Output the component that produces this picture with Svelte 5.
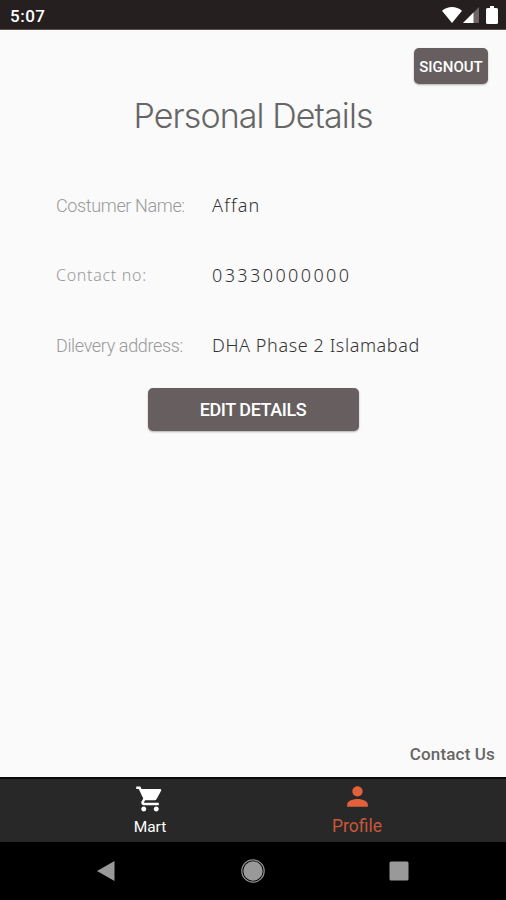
<script lang="ts">
  const details = [
    { label: "Costumer Name:", value: "Affan", kind: "name" },
    { label: "Contact no:", value: "03330000000", kind: "phone" },
    { label: "Dilevery address:", value: "DHA Phase 2 Islamabad", kind: "address" },
  ];
</script>

<div class="screen">
  <header class="status">
    <span class="time">5:07</span>
    <div class="status-icons">
      <svg class="wifi" width="20" height="16" viewBox="0 0 20 16">
        <path d="M0 3.7C6-1.2 14-1.2 20 3.7L10 16z" fill="#fff" />
      </svg>
      <svg class="signal" width="16" height="16" viewBox="0 0 16 16">
        <path d="M16 0v16H0z" fill="#6b6565" />
        <path d="M10.5 5.5V16H0z" fill="#fff" />
      </svg>
      <svg class="battery" width="12" height="18" viewBox="0 0 12 18">
        <path d="M4 0h4v2h2.5Q12 2 12 3.5v13q0 1.5-1.5 1.5h-9Q0 18 0 16.5v-13Q0 2 1.5 2H4z" fill="#fff" />
      </svg>
    </div>
  </header>

  <main>
    <button class="signout">SIGNOUT</button>
    <h1>Personal Details</h1>
    <dl>
      {#each details as item}
        <div class="row {item.kind}">
          <dt>{item.label}</dt>
          <dd>{item.value}</dd>
        </div>
      {/each}
    </dl>
    <button class="edit">EDIT DETAILS</button>
    <a class="contact" href="#contact">Contact Us</a>
  </main>

  <nav class="tabs">
    <div class="tab mart">
      <svg width="30" height="30" viewBox="0 0 24 24" fill="currentColor">
        <path d="M7 18c-1.100 0-1.990.9-1.990 2S5.900 22 7 22s2-.9 2-2-.9-2-2-2zM1 2v2h2l3.600 7.590-1.350 2.450c-.16.280-.25.610-.25.960 0 1.100.9 2 2 2h12v-2H7.420c-.14 0-.25-.11-.25-.25l.03-.12.9-1.630h7.450c.75 0 1.410-.41 1.750-1.030l3.580-6.490c.08-.14.12-.31.12-.48 0-.55-.45-1-1-1H5.210l-.94-2H1zm16 16c-1.100 0-1.990.9-1.990 2s.89 2 1.990 2 2-.9 2-2-.9-2-2-2z" />
      </svg>
      <span>Mart</span>
    </div>
    <div class="tab profile">
      <svg width="31" height="31" viewBox="0 0 24 24" fill="currentColor">
        <path d="M12 12c2.210 0 4-1.790 4-4s-1.790-4-4-4-4 1.790-4 4 1.790 4 4 4zm0 2c-2.670 0-8 1.340-8 4v2h16v-2c0-2.660-5.330-4-8-4z" />
      </svg>
      <span>Profile</span>
    </div>
  </nav>

  <footer class="system">
    <svg width="20" height="22" viewBox="0 0 20 22">
      <path d="M18.500 1v20L1 11z" fill="#999" />
    </svg>
    <svg width="24" height="24" viewBox="0 0 24 24">
      <circle cx="12" cy="12" r="11.200" fill="none" stroke="#929292" stroke-width="1.200" />
      <circle cx="12" cy="12" r="9.700" fill="#999" />
    </svg>
    <svg width="20" height="20" viewBox="0 0 20 20">
      <rect x="0.500" y="0.500" width="19" height="19" rx="1.500" fill="#999" />
    </svg>
  </footer>
</div>

<style>
  :global(body) {
    margin: 0;
  }

  .screen {
    display: flex;
    flex-direction: column;
    width: 506px;
    height: 900px;
    overflow: hidden;
    background: #fafafa;
    font-family: Roboto, sans-serif;
  }

  .status {
    box-sizing: border-box;
    display: flex;
    justify-content: space-between;
    height: 30px;
    padding: 0 8px 0 10px;
    background: #261f20;
    border-bottom: 1px solid #5b5353;
    color: #fff;
  }

  .time {
    font-size: 17px;
    font-weight: 500;
    line-height: 32px;
    letter-spacing: 0.5px;
  }

  .status-icons {
    display: flex;
    align-items: flex-start;
    padding-top: 6px;
  }

  .wifi {
    margin-top: 1px;
  }

  .signal {
    margin: 1px 7px 0 1px;
  }

  main {
    display: flex;
    flex: 1;
    flex-direction: column;
    align-items: center;
  }

  button {
    padding: 0;
    border: 0;
    border-radius: 5px;
    background: #675f5f;
    box-shadow: 0 1px 2px rgba(0, 0, 0, 0.3);
    color: #fff;
    font-family: inherit;
    font-weight: 500;
  }

  .signout {
    align-self: flex-end;
    width: 74px;
    height: 36px;
    margin: 18px 18px 0 0;
    font-size: 15px;
    line-height: 38px;
  }

  h1 {
    margin: 10px 0 0;
    color: #666;
    font-family: Inter, sans-serif;
    font-size: 34px;
    font-weight: 300;
    letter-spacing: -0.9px;
    line-height: 44px;
  }

  dl {
    align-self: stretch;
    margin: 32px 0 0 56px;
  }

  .row {
    display: grid;
    grid-template-columns: 156px 1fr;
    align-items: center;
    height: 70px;
  }

  dt {
    color: #999;
    font-size: 18px;
    font-weight: 300;
    letter-spacing: -0.36px;
    white-space: nowrap;
  }

  dd {
    margin: 0;
    color: #333;
    font-family: "Noto Sans", sans-serif;
    font-size: 18px;
    font-weight: 300;
    white-space: nowrap;
  }

  .name dd {
    letter-spacing: 1.2px;
  }

  .phone dt {
    font-family: "Noto Sans", sans-serif;
    font-size: 16px;
    letter-spacing: 0.7px;
  }

  .phone dd {
    letter-spacing: 2.4px;
  }

  .address dd {
    letter-spacing: 0.6px;
  }

  .edit {
    width: 211px;
    height: 43px;
    margin-top: 8px;
    font-size: 18px;
    letter-spacing: -0.42px;
    line-height: 44px;
  }

  .contact {
    align-self: flex-end;
    margin: auto 11px 11px 0;
    color: #666;
    font-size: 17px;
    font-weight: 500;
    letter-spacing: 0.15px;
    line-height: 23px;
    text-decoration: none;
  }

  .tabs {
    box-sizing: border-box;
    display: flex;
    justify-content: space-between;
    height: 65px;
    padding: 5px 98px 0 99px;
    border-top: 2px solid #090909;
    background: #282828;
  }

  .tab {
    display: flex;
    flex-direction: column;
    align-items: center;
    width: 102px;
    color: #fff;
    font-size: 15.5px;
    line-height: 20px;
  }

  .tab svg {
    margin-bottom: 3px;
  }

  .profile {
    color: #e2603b;
    font-size: 17.5px;
  }

  .profile svg {
    margin: -3px 0 4px;
  }

  .profile span {
    color: #c8583a;
  }

  .system {
    display: flex;
    align-items: center;
    justify-content: space-between;
    height: 58px;
    padding: 0 97px 0 96px;
    background: #000;
  }
</style>
